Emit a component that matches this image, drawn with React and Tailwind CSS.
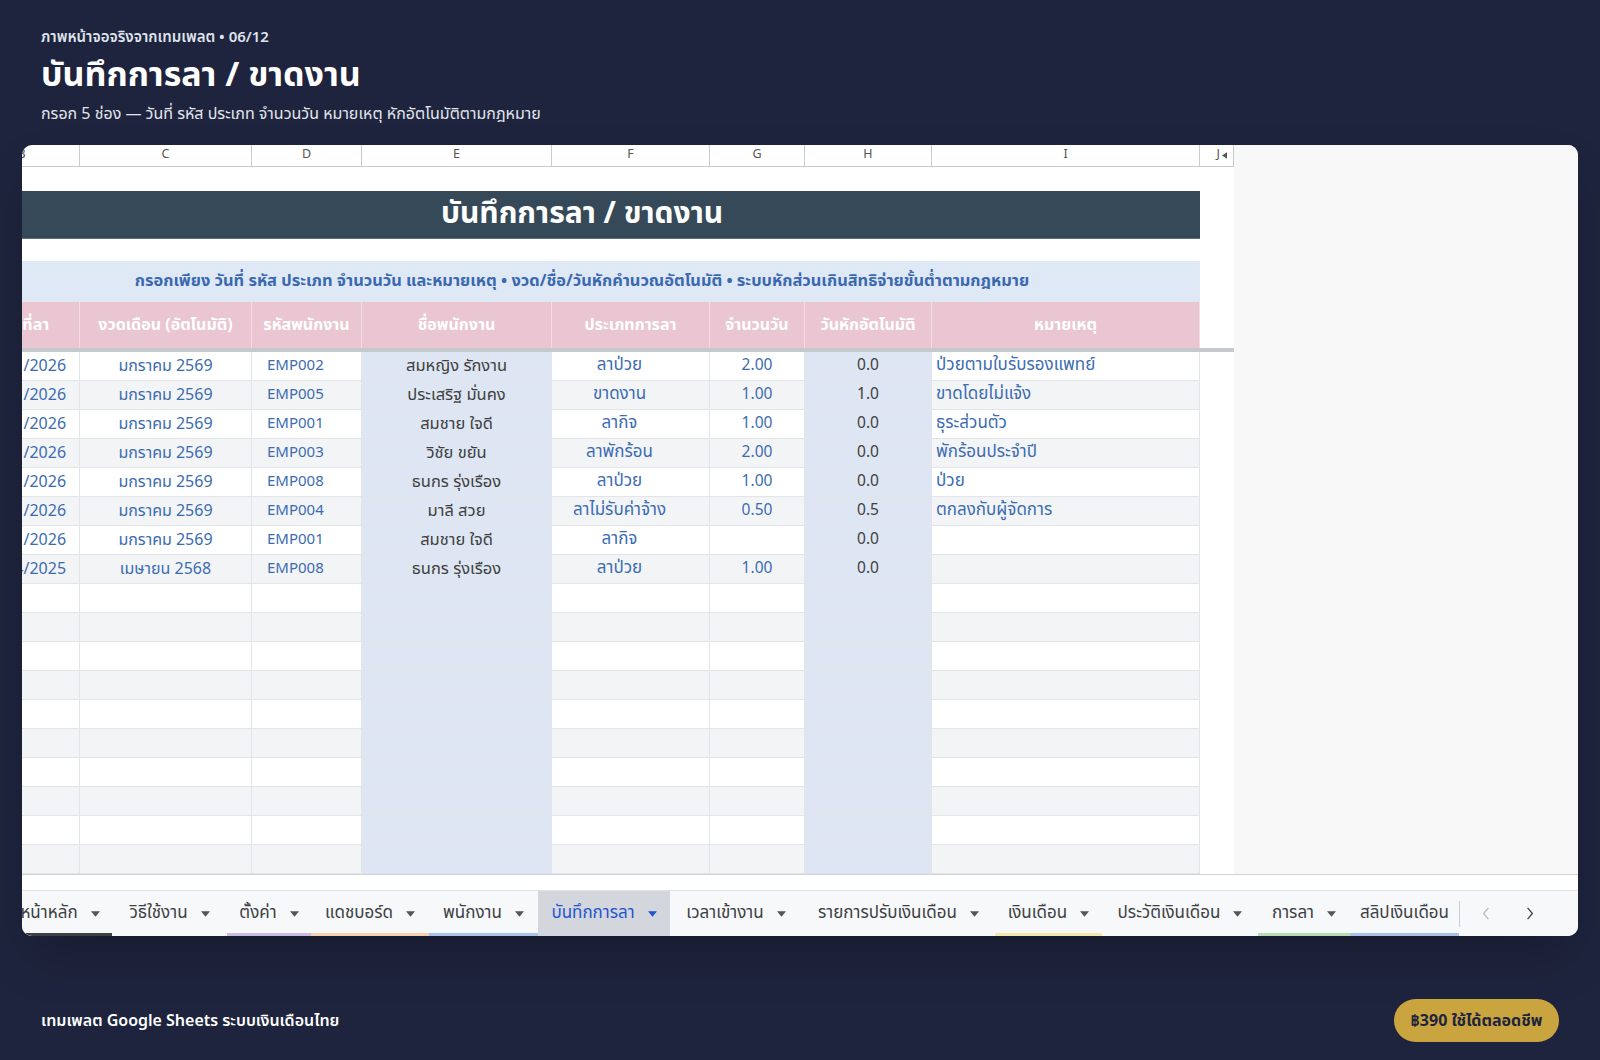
import React from "react";

const FONT = "font-['Noto_Sans_Thai','Noto_Sans','Liberation_Sans',sans-serif]";

const rows = [
  { date: "15/01/2026", month: "มกราคม 2569", code: "EMP002", name: "สมหญิง รักงาน", type: "ลาป่วย", days: "2.00", cut: "0.0", note: "ป่วยตามใบรับรองแพทย์" },
  { date: "16/01/2026", month: "มกราคม 2569", code: "EMP005", name: "ประเสริฐ มั่นคง", type: "ขาดงาน", days: "1.00", cut: "1.0", note: "ขาดโดยไม่แจ้ง" },
  { date: "19/01/2026", month: "มกราคม 2569", code: "EMP001", name: "สมชาย ใจดี", type: "ลากิจ", days: "1.00", cut: "0.0", note: "ธุระส่วนตัว" },
  { date: "21/01/2026", month: "มกราคม 2569", code: "EMP003", name: "วิชัย ขยัน", type: "ลาพักร้อน", days: "2.00", cut: "0.0", note: "พักร้อนประจำปี" },
  { date: "22/01/2026", month: "มกราคม 2569", code: "EMP008", name: "ธนกร รุ่งเรือง", type: "ลาป่วย", days: "1.00", cut: "0.0", note: "ป่วย" },
  { date: "26/01/2026", month: "มกราคม 2569", code: "EMP004", name: "มาลี สวย", type: "ลาไม่รับค่าจ้าง", days: "0.50", cut: "0.5", note: "ตกลงกับผู้จัดการ" },
  { date: "28/01/2026", month: "มกราคม 2569", code: "EMP001", name: "สมชาย ใจดี", type: "ลากิจ", days: "", cut: "0.0", note: "" },
  { date: "14/04/2025", month: "เมษายน 2568", code: "EMP008", name: "ธนกร รุ่งเรือง", type: "ลาป่วย", days: "1.00", cut: "0.0", note: "" },
];

const empty = Array.from({ length: 10 }, () => ({ date: "", month: "", code: "", name: "", type: "", days: "", cut: "", note: "" }));

const tabs = [
  { label: "หน้าหลัก", w: "w-[122px] pl-[18px]", line: "bg-[#3c4043]" },
  { label: "วิธีใช้งาน", w: "w-[115px]", line: "" },
  { label: "ตั้งค่า", w: "w-[84px]", line: "bg-[#cbbbe0]" },
  { label: "แดชบอร์ด", w: "w-[118px]", line: "bg-[#f7d1ad]" },
  { label: "พนักงาน", w: "w-[109px]", line: "bg-[#aac2ea]" },
  { label: "บันทึกการลา", w: "w-[132px]", line: "", active: true },
  { label: "เวลาเข้างาน", w: "w-[132px]", line: "" },
  { label: "รายการปรับเงินเดือน", w: "w-[193px]", line: "" },
  { label: "เงินเดือน", w: "w-[107px]", line: "bg-[#f6e7a6]" },
  { label: "ประวัติเงินเดือน", w: "w-[156px]", line: "" },
  { label: "การลา", w: "w-[92px]", line: "bg-[#b9dbb1]" },
  { label: "สลิปเงินเดือน", w: "w-[109px]", line: "bg-[#a9c0ea]", noArrow: true },
];

const Cell = ({ w, className = "", children }) => (
  <div className={`${w} shrink-0 h-full flex items-center border-r border-b border-[#e1e4e8] overflow-hidden whitespace-nowrap ${className}`}>
    {children}
  </div>
);

const DataRow = ({ r, i }) => {
  const bg = i % 2 === 1 ? "bg-[#f3f4f6]" : "bg-white";
  return (
    <div className="flex h-[29px] text-[16px]">
      <Cell w="w-[116px]" className={`${bg} justify-center pl-[4px] text-[#3b6cb2]`}>{r.date}</Cell>
      <Cell w="w-[172px]" className={`${bg} justify-center text-[#3b6cb2]`}>{r.month}</Cell>
      <Cell w="w-[110px]" className={`${bg} pl-[15px] text-[#3b6cb2] text-[15px]`}>{r.code}</Cell>
      <Cell w="w-[190px]" className="bg-[#dde6f2] justify-center text-[#404040] text-[16.5px]">{r.name}</Cell>
      <Cell w="w-[158px]" className={`${bg} justify-center pr-[22px] text-[#3b6cb2] text-[17px]`}>{r.type}</Cell>
      <Cell w="w-[95px]" className={`${bg} justify-center text-[#3b6cb2] text-[15.5px]`}>{r.days}</Cell>
      <Cell w="w-[127px]" className="bg-[#dde6f2] justify-center text-[#404040] text-[15.5px]">{r.cut}</Cell>
      <Cell w="w-[268px]" className={`${bg} pl-[4px] text-[#3b6cb2] text-[17px]`}>{r.note}</Cell>
      <div className="w-[34px] shrink-0 h-full bg-white" />
    </div>
  );
};

const ColHead = ({ w, children }) => (
  <div className={`${w} shrink-0 h-full flex items-center justify-center border-r border-b border-[#c8cacc] text-[12.5px] text-[#555]`}>
    {children}
  </div>
);

const HeadCell = ({ w, children }) => (
  <div className={`${w} shrink-0 h-full flex items-center justify-center border-r border-[#f2dde5] whitespace-nowrap`}>
    {children}
  </div>
);

const Caret = ({ className = "" }) => (
  <svg viewBox="0 0 10 6" className={`w-[9px] h-[6px] ${className}`}>
    <path d="M0 0h10L5 6z" fill="currentColor" />
  </svg>
);

export default function App() {
  return (
    <div className={`w-[1600px] h-[1060px] bg-[#1e243d] flex flex-col ${FONT}`}>
      {/* Page header */}
      <div className="px-[41px] pt-[25px]">
        <div className="text-[15px] leading-[26px] font-semibold text-[#dfe3ec]">ภาพหน้าจอจริงจากเทมเพลต • 06/12</div>
        <h1 className="text-[34px] leading-[44px] font-bold text-white mt-[3px]">บันทึกการลา / ขาดงาน</h1>
        <p className="text-[16px] leading-[24px] text-[#e3e6ee] mt-[4px]">กรอก 5 ช่อง — วันที่ รหัส ประเภท จำนวนวัน หมายเหตุ หักอัตโนมัติตามกฎหมาย</p>
      </div>

      {/* Sheet card */}
      <div className="mx-[22px] mt-[19px] h-[791px] bg-white rounded-[10px] overflow-hidden flex flex-col shadow-2xl">
        <div className="flex h-[729px]">
          <div className="w-[1212px] shrink-0 overflow-hidden">
            <div className="ml-[-58px] w-[1270px]">
              {/* column letters */}
              <div className="flex h-[22px]">
                <ColHead w="w-[116px]">B</ColHead>
                <ColHead w="w-[172px]">C</ColHead>
                <ColHead w="w-[110px]">D</ColHead>
                <ColHead w="w-[190px]">E</ColHead>
                <ColHead w="w-[158px]">F</ColHead>
                <ColHead w="w-[95px]">G</ColHead>
                <ColHead w="w-[127px]">H</ColHead>
                <ColHead w="w-[268px]">I</ColHead>
                <div className="w-[34px] shrink-0 h-full flex items-center justify-end pr-[6px] gap-[2px] border-r border-b border-[#c8cacc] text-[12.5px] text-[#555]">
                  J
                  <svg viewBox="0 0 6 8" className="w-[5px] h-[7px]">
                    <path d="M6 0v8L0 4z" fill="#555" />
                  </svg>
                </div>
              </div>
              <div className="h-[24px]" />
              {/* title banner */}
              <div className="flex h-[48px]">
                <div className="w-[1236px] shrink-0 bg-[#354959] border-b border-[#5c6d7a] flex items-center justify-center text-white font-bold text-[30px]">
                  บันทึกการลา / ขาดงาน
                </div>
              </div>
              <div className="h-[22px]" />
              {/* info row */}
              <div className="flex h-[41px]">
                <div className="w-[1236px] shrink-0 bg-[#dfe8f5] flex items-center justify-center text-[#3a69b0] font-bold text-[16.4px] whitespace-nowrap">
                  กรอกเพียง วันที่ รหัส ประเภท จำนวนวัน และหมายเหตุ • งวด/ชื่อ/วันหักคำนวณอัตโนมัติ • ระบบหักส่วนเกินสิทธิจ่ายขั้นต่ำตามกฎหมาย
                </div>
              </div>
              {/* table header */}
              <div className="flex h-[46px] text-white font-bold text-[16px]">
                <div className="flex bg-[#e9c6d2] h-full">
                  <HeadCell w="w-[116px] pl-[10px]">วันที่ลา</HeadCell>
                  <HeadCell w="w-[172px]">งวดเดือน (อัตโนมัติ)</HeadCell>
                  <HeadCell w="w-[110px]">รหัสพนักงาน</HeadCell>
                  <HeadCell w="w-[190px]">ชื่อพนักงาน</HeadCell>
                  <HeadCell w="w-[158px]">ประเภทการลา</HeadCell>
                  <HeadCell w="w-[95px]">จำนวนวัน</HeadCell>
                  <HeadCell w="w-[127px]">วันหักอัตโนมัติ</HeadCell>
                  <HeadCell w="w-[268px]">หมายเหตุ</HeadCell>
                </div>
              </div>
              <div className="h-[4px] bg-[#c5c8cc]" />
              {[...rows, ...empty].map((r, i) => (
                <DataRow key={i} r={r} i={i} />
              ))}
            </div>
          </div>
          <div className="flex-1 bg-[#f8f8f8]" />
        </div>

        {/* horizontal scroll strip */}
        <div className="h-[16px] border-t border-[#cfd2d6] bg-white" />

        {/* sheet tabs */}
        <div className="h-[46px] flex items-stretch bg-[#f7f8fa] border-t border-[#dfe1e5] text-[17px] text-[#3c4043]">
          <div className="w-[1437px] shrink-0 overflow-hidden">
            <div className="flex ml-[-32px] h-full">
              {tabs.map((t) => (
                <div
                  key={t.label}
                  className={`${t.w} shrink-0 h-full relative flex items-center justify-center gap-[13px] whitespace-nowrap ${t.active ? "bg-[#d3d6dc] text-[#1f55d0]" : ""}`}
                >
                  <span>{t.label}</span>
                  {!t.noArrow && <Caret className={t.active ? "text-[#1f55d0]" : "text-[#555]"} />}
                  {t.line && <div className={`absolute left-0 right-0 bottom-0 h-[3px] ${t.line}`} />}
                </div>
              ))}
            </div>
          </div>
          <div className="w-px h-[26px] self-center bg-[#c9ccd0]" />
          <div className="flex-1 flex items-center pl-[22px] gap-[36px]">
            <svg viewBox="0 0 10 16" className="w-[8px] h-[13px]">
              <path d="M8 1L2 8l6 7" stroke="#b5b8bd" strokeWidth="1.6" fill="none" />
            </svg>
            <svg viewBox="0 0 10 16" className="w-[8px] h-[13px]">
              <path d="M2 1l6 7-6 7" stroke="#3c4043" strokeWidth="1.6" fill="none" />
            </svg>
          </div>
        </div>
      </div>

      {/* footer */}
      <div className="flex items-center justify-between px-[41px] mt-[63px]">
        <div className="text-[16px] font-semibold text-white">เทมเพลต Google Sheets ระบบเงินเดือนไทย</div>
        <div className="h-[43px] w-[165px] rounded-full bg-[#c9a43f] flex items-center justify-center text-[16px] font-bold text-[#1e243d]">
          ฿390 ใช้ได้ตลอดชีพ
        </div>
      </div>
    </div>
  );
}
